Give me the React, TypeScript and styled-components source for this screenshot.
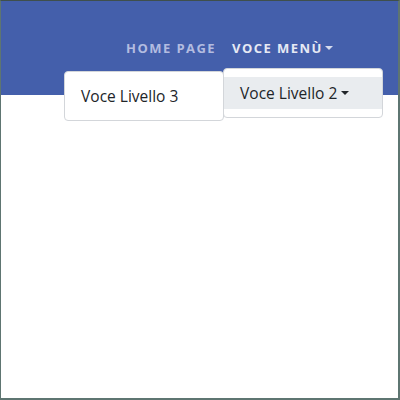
import React from 'react';
import styled, { createGlobalStyle } from 'styled-components';

const GlobalStyle = createGlobalStyle`
  html, body {
    margin: 0;
    padding: 0;
    background: #ffffff;
  }
  body {
    font-family: "Open Sans", "Noto Sans", "Liberation Sans", sans-serif;
  }
`;

function App() {
  return (
    <>
      <GlobalStyle />
      <Frame>
        <Header>
          <NavList>
            <NavItem>
              <NavLink>Home page</NavLink>
            </NavItem>
            <NavItem>
              <NavLink $active>
                Voce menù
                <Caret $size={4} />
              </NavLink>
              <SubMenu>
                <SubItem $active>
                  Voce Livello 2
                  <Caret $size={4.5} $dark />
                </SubItem>
              </SubMenu>
              <ThirdMenu>
                <SubItem>Voce Livello 3</SubItem>
              </ThirdMenu>
            </NavItem>
          </NavList>
        </Header>
        <Main />
      </Frame>
    </>
  );
}

export default App;

const Frame = styled.div`
  width: 400px;
  height: 400px;
  box-sizing: border-box;
  border-left: 1px solid #5e7571;
  border-right: 2px solid #5e7571;
  border-bottom: 2px solid #5e7571;
  border-top: 1px solid #3f4f4c;
  display: flex;
  flex-direction: column;
  overflow: hidden;
`;

const Header = styled.header`
  height: 94px;
  background: #445fab;
  display: flex;
  justify-content: flex-start;
  padding-left: 125px;
  box-sizing: border-box;
`;

const NavList = styled.ul`
  list-style: none;
  margin: 0;
  padding: 0;
  display: flex;
  gap: 16px;
  height: 72px;
  align-items: center;
  padding-top: 22px;
  box-sizing: border-box;
`;

const NavItem = styled.li`
  position: relative;
`;

const NavLink = styled.a<{ $active?: boolean }>`
  display: flex;
  align-items: center;
  font-size: 13px;
  font-weight: 700;
  letter-spacing: 1.45px;
  text-transform: uppercase;
  color: ${(p) => (p.$active ? '#e6e9f4' : '#b3bce0')};
  cursor: pointer;
`;

const Caret = styled.span<{ $size: number; $dark?: boolean }>`
  display: inline-block;
  margin-left: ${(p) => (p.$size > 4 ? 4 : 2)}px;
  width: 0;
  height: 0;
  border-left: ${(p) => p.$size}px solid transparent;
  border-right: ${(p) => p.$size}px solid transparent;
  border-top: ${(p) => p.$size}px solid ${(p) => (p.$dark ? '#212529' : '#d5dbee')};
`;

const SubMenu = styled.div`
  position: absolute;
  top: 29px;
  left: -9px;
  width: 160px;
  box-sizing: border-box;
  background: #ffffff;
  border: 1px solid #d3d6da;
  border-radius: 4px;
  padding: 8px 0;
`;

const ThirdMenu = styled.div`
  position: absolute;
  top: 32px;
  left: -168px;
  width: 160px;
  box-sizing: border-box;
  background: #ffffff;
  border: 1px solid #d3d6da;
  border-radius: 4px;
  padding: 8px 0;
`;

const SubItem = styled.div<{ $active?: boolean }>`
  display: flex;
  align-items: center;
  height: 32px;
  padding: 0 16px;
  font-size: 15.5px;
  color: #212529;
  white-space: nowrap;
  background: ${(p) => (p.$active ? '#e9ecef' : 'transparent')};
`;

const Main = styled.main`
  flex: 1;
  background: #ffffff;
`;
